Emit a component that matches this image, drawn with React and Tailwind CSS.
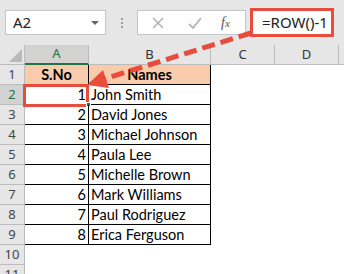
import React from "react";

const rows = [
  [1, "John Smith"],
  [2, "David Jones"],
  [3, "Michael Johnson"],
  [4, "Paula Lee"],
  [5, "Michelle Brown"],
  [6, "Mark Williams"],
  [7, "Paul Rodriguez"],
  [8, "Erica Ferguson"],
];

const RowHead = ({ n, active }) => (
  <div
    className={`h-[20px] w-[25px] flex items-center justify-center border-r border-b border-[#bcbcbc] text-[13px] font-['Noto_Sans',sans-serif] ${
      active ? "bg-[#d2d2d2] text-[#217346]" : "bg-[#e6e6e6] text-[#444]"
    }`}
  >
    {n}
  </div>
);

const App = () => {
  return (
    <div className="relative w-[344px] h-[274px] overflow-hidden bg-white font-['Lato',sans-serif] text-black">
      {/* formula bar */}
      <div className="h-[45px] bg-[#e6e6e6] flex items-start pt-[10px] pl-[5px]">
        <div className="w-[101px] h-[25px] bg-white border border-[#c6c6c6] flex items-center justify-between pl-[7px] pr-[6px]">
          <span className="text-[15px] text-[#222] font-['Noto_Sans',sans-serif]">A2</span>
          <span className="w-0 h-0 border-l-[4px] border-r-[4px] border-t-[4px] border-l-transparent border-r-transparent border-t-[#666]" />
        </div>
        <div className="w-[31px] h-[25px] flex flex-col items-center justify-center gap-[2px]">
          <span className="w-[2px] h-[2px] bg-[#999]" />
          <span className="w-[2px] h-[2px] bg-[#999]" />
          <span className="w-[2px] h-[2px] bg-[#999]" />
        </div>
        <div className="w-[109px] h-[25px] bg-white border border-[#c6c6c6] flex items-center">
          <svg width="14" height="14" viewBox="0 0 14 14" className="ml-[13px]">
            <path d="M2 2 L12 12 M12 2 L2 12" stroke="#b4b4b4" strokeWidth="1.6" fill="none" />
          </svg>
          <svg width="16" height="14" viewBox="0 0 16 14" className="ml-[22px]">
            <path d="M2 8 L6 12 L14 2" stroke="#b4b4b4" strokeWidth="1.8" fill="none" />
          </svg>
          <span className="ml-[18px] text-[14px] italic text-[#555] font-['Liberation_Serif',serif]">
            f<span className="text-[11px]">x</span>
          </span>
        </div>
        <div className="ml-[4px] -mt-[2px] w-[84px] h-[29px] bg-white border-[3px] border-[#e84c3d] flex items-center pl-[9px]">
          <span className="text-[15px] text-[#222] font-['Noto_Sans',sans-serif]">=ROW()-1</span>
        </div>
      </div>

      {/* sheet */}
      <div className="grid grid-cols-[25px_64px_122px_64px_64px_1fr]">
        {/* column headers */}
        <div className="h-[20px] bg-[#e6e6e6] border-r border-b border-[#bcbcbc] flex items-end justify-end pr-[2px] pb-[2px]">
          <svg width="13" height="13" viewBox="0 0 13 13">
            <polygon points="13,0 13,13 0,13" fill="#b9b9b9" />
          </svg>
        </div>
        <div className="h-[20px] bg-[#d2d2d2] border-r border-[#bcbcbc] border-b-2 border-b-[#217346] flex items-center justify-center text-[13px] text-[#217346] font-['Noto_Sans',sans-serif]">
          A
        </div>
        {["B", "C", "D"].map((c) => (
          <div
            key={c}
            className="h-[20px] bg-[#e6e6e6] border-r border-b border-[#bcbcbc] flex items-center justify-center text-[13px] text-[#333] font-['Noto_Sans',sans-serif]"
          >
            {c}
          </div>
        ))}
        <div className="h-[20px] bg-[#e6e6e6] border-b border-[#bcbcbc]" />

        {/* row 1 */}
        <RowHead n={1} />
        <div className="h-[20px] bg-[#f8cbad] border-r border-b border-black flex items-center justify-center text-[14.5px] font-bold">
          S.No
        </div>
        <div className="h-[20px] bg-[#f8cbad] border-r border-b border-black flex items-center justify-center text-[14.5px] font-bold">
          Names
        </div>
        <div />
        <div />
        <div />

        {rows.map(([n, name], i) => (
          <React.Fragment key={n}>
            <RowHead n={i + 2} active={i === 0} />
            <div className="relative h-[20px] border-r border-b border-black flex items-center justify-end pr-[2px] text-[14.5px]">
              {n}
              {i === 0 && (
                <>
                  <span className="absolute -left-[2px] -top-[1px] w-[66px] h-[23px] border-[3px] border-[#e84c3d]" />
                  <span className="absolute -right-[3px] -bottom-[3px] w-[5px] h-[5px] bg-[#217346] border border-white" />
                </>
              )}
            </div>
            <div className="h-[20px] border-r border-b border-black flex items-center pl-[2px] text-[14.5px] whitespace-nowrap">
              {name}
            </div>
            <div />
            <div />
            <div />
          </React.Fragment>
        ))}

        <RowHead n={10} />
        <div />
        <div />
        <div />
        <div />
        <div />
        <RowHead n={11} />
        <div />
        <div />
        <div />
        <div />
        <div />
      </div>

      {/* dashed arrow */}
      <svg className="absolute inset-0 pointer-events-none" width="344" height="274" viewBox="0 0 344 274">
        <line x1="251" y1="33" x2="104" y2="79" stroke="#e84c3d" strokeWidth="5" strokeDasharray="13 6" />
        <polygon points="87,85 109,88 103,70" fill="#e84c3d" />
      </svg>
    </div>
  );
};

export default App;
